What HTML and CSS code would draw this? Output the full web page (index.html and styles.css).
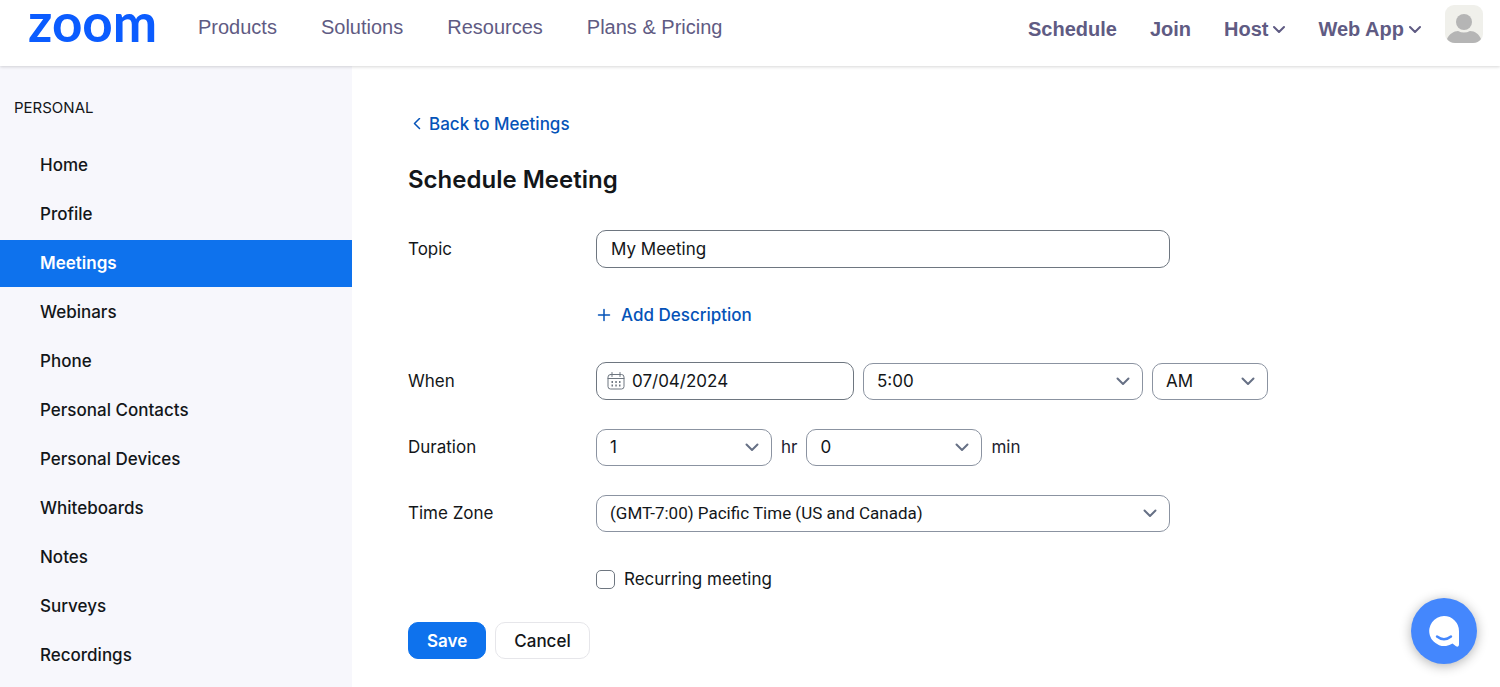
FILE: index.html
```
<!DOCTYPE html>
<html lang="en">
  <head>
    <meta charset="utf-8" />
    <meta name="viewport" content="width=device-width, initial-scale=1" />
    <title>Schedule Meeting - Zoom</title>
    <link rel="stylesheet" href="styles.css">
  </head>

  <body>
    <header class="header">
      <a class="logo" href="#">zoom</a>
      <nav class="nav-main" aria-label="Main">
        <a href="#">Products</a>
        <a href="#">Solutions</a>
        <a href="#">Resources</a>
        <a href="#">Plans &amp; Pricing</a>
      </nav>
      <nav class="nav-user" aria-label="Account">
        <a href="#">Schedule</a>
        <a href="#">Join</a>
        <a href="#">Host
          <svg width="12" height="8" viewBox="0 0 12 8"><path d="M1 2l5 5 5-5" /></svg>
        </a>
        <a href="#">Web App
          <svg width="12" height="8" viewBox="0 0 12 8"><path d="M1 2l5 5 5-5" /></svg>
        </a>
      </nav>
      <a class="avatar" href="#" aria-label="Profile">
        <svg width="38" height="38" viewBox="0 0 38 38">
          <rect width="38" height="38" rx="9" fill="#f0f0eb" />
          <circle cx="19" cy="17" r="8" fill="#b5b5b5" />
          <path d="M2 34C4 29 9 26 13 26q6 3 12 0C30 26 34 29 36 34q-3 4-8 4H10q-5 0-8-4z" fill="#b5b5b5" />
        </svg>
      </a>
    </header>

    <div class="layout">
      <aside class="sidebar">
        <h2>PERSONAL</h2>
        <nav class="side-nav" aria-label="Personal">
          <a href="#">Home</a>
          <a href="#">Profile</a>
          <a href="#" class="active">Meetings</a>
          <a href="#">Webinars</a>
          <a href="#">Phone</a>
          <a href="#">Personal Contacts</a>
          <a href="#">Personal Devices</a>
          <a href="#">Whiteboards</a>
          <a href="#">Notes</a>
          <a href="#">Surveys</a>
          <a href="#">Recordings</a>
        </nav>
      </aside>

      <main class="content">
        <a class="back-link" href="#">
          <svg width="8" height="12" viewBox="0 0 8 12"><path d="M6.500 .5L1.500 5.500l5 5" /></svg>
          Back to Meetings
        </a>
        <h1>Schedule Meeting</h1>

        <form class="meeting-form">
          <div class="form-row">
            <label for="topic">Topic</label>
            <div class="controls">
              <input type="text" id="topic" class="field wide" value="My Meeting">
            </div>
          </div>

          <div class="form-row">
            <div class="controls no-label">
              <button type="button" class="add-description">
                <svg width="16" height="16" viewBox="0 0 16 16"><path d="M8 2.500v11M2.500 8h11" /></svg>
                Add Description
              </button>
            </div>
          </div>

          <div class="form-row">
            <label for="date">When</label>
            <div class="controls">
              <div class="date-box">
                <input type="text" id="date" class="field" value="07/04/2024">
                <svg class="calendar" width="18" height="18" viewBox="0 0 18 18">
                  <rect x="1" y="2.500" width="16" height="14.500" rx="2.500" />
                  <path d="M1 6.500h16M5 .5v4M13 .5v4" />
                  <path class="dots" d="M8.300 10h1.500M12 10h1.500M4.500 13.500H6M8.300 13.500h1.500M12 13.500h1.500M4.500 10H6" />
                </svg>
              </div>
              <div class="select-box time">
                <select class="field" aria-label="Time">
                  <option>5:00</option>
                  <option>5:30</option>
                </select>
                <svg class="chevron" width="14" height="9" viewBox="0 0 14 9"><path d="M1.500 1.500L7 7l5.500-5.500" /></svg>
              </div>
              <div class="select-box ampm">
                <select class="field" aria-label="AM or PM">
                  <option>AM</option>
                  <option>PM</option>
                </select>
                <svg class="chevron" width="14" height="9" viewBox="0 0 14 9"><path d="M1.500 1.500L7 7l5.500-5.500" /></svg>
              </div>
            </div>
          </div>

          <div class="form-row">
            <label for="hours">Duration</label>
            <div class="controls">
              <div class="select-box short">
                <select class="field" id="hours">
                  <option>1</option>
                  <option>2</option>
                </select>
                <svg class="chevron" width="14" height="9" viewBox="0 0 14 9"><path d="M1.500 1.500L7 7l5.500-5.500" /></svg>
              </div>
              <label class="unit" for="hours">hr</label>
              <div class="select-box short">
                <select class="field" id="minutes">
                  <option>0</option>
                  <option>15</option>
                  <option>30</option>
                  <option>45</option>
                </select>
                <svg class="chevron" width="14" height="9" viewBox="0 0 14 9"><path d="M1.500 1.500L7 7l5.500-5.500" /></svg>
              </div>
              <label class="unit" for="minutes">min</label>
            </div>
          </div>

          <div class="form-row">
            <label for="timezone">Time Zone</label>
            <div class="controls">
              <div class="select-box wide">
                <select class="field zone" id="timezone">
                  <option>(GMT-7:00) Pacific Time (US and Canada)</option>
                </select>
                <svg class="chevron" width="14" height="9" viewBox="0 0 14 9"><path d="M1.500 1.500L7 7l5.500-5.500" /></svg>
              </div>
            </div>
          </div>

          <div class="form-row">
            <div class="controls no-label">
              <input type="checkbox" id="recurring" class="checkbox">
              <label for="recurring">Recurring meeting</label>
            </div>
          </div>

          <div class="form-actions">
            <button type="submit" class="btn btn-primary">Save</button>
            <button type="button" class="btn">Cancel</button>
          </div>
        </form>
      </main>
    </div>

    <button type="button" class="chat-button" aria-label="Open chat">
      <svg width="32" height="32" viewBox="0 0 32 32">
        <path d="M16 1a15 15 0 1 0 8.500 27.500l3.500 2.800q3 1.200 3-1.800V16A15 15 0 0 0 16 1z" fill="#fff" />
        <path d="M9 21.500q7 5.500 14 0" fill="none" stroke="#4487fd" stroke-width="2.400" stroke-linecap="round" />
      </svg>
    </button>
  </body>
</html>
```
FILE: styles.css
```
* {
  box-sizing: border-box;
}
body {
  margin: 0;
  min-height: 100vh;
  display: flex;
  flex-direction: column;
  font-family: Inter, "Liberation Sans", sans-serif;
  font-size: 17px;
  line-height: 24px;
  color: #131619;
  background-color: #fff;
}
a {
  color: inherit;
  text-decoration: none;
}
button,
input,
select {
  font: inherit;
  color: inherit;
}
svg {
  flex: none;
  fill: none;
  stroke-linecap: round;
  stroke-linejoin: round;
}

/* Header */
.header {
  display: flex;
  align-items: flex-start;
  height: 66px;
  padding: 0 17px 0 28px;
  box-shadow: 0 1px 3px rgba(0, 0, 0, 0.16);
  position: relative;
  color: #5f5b83;
  font-family: "Liberation Sans", Arial, sans-serif;
  font-size: 20px;
}
.logo {
  width: 170px;
  font-family: Lato, sans-serif;
  font-size: 53px;
  font-weight: 700;
  line-height: 44px;
  color: #0b5cff;
}
.nav-main {
  display: flex;
  gap: 44px;
  padding-top: 15px;
}
.nav-user {
  display: flex;
  gap: 33px;
  margin-left: auto;
  padding-top: 17px;
  font-weight: 700;
}
.nav-user a {
  display: flex;
  align-items: center;
  gap: 5px;
}
.nav-user svg {
  stroke: #5f5b83;
  stroke-width: 2;
}
.avatar {
  margin: 5px 0 0 24px;
}
.avatar svg {
  display: block;
}

/* Sidebar */
.layout {
  flex: 1;
  display: flex;
}
.sidebar {
  flex: 0 0 352px;
  background-color: #f7f7fc;
}
.sidebar h2 {
  margin: 30px 14px 22px;
  font-size: 15px;
  font-weight: 400;
  line-height: 24px;
}
.side-nav {
  display: flex;
  flex-direction: column;
  gap: 2px;
}
.side-nav a {
  padding: 11px 40px 12px;
  font-weight: 500;
}
.side-nav .active {
  background-color: #0e72ed;
  color: #fff;
  font-weight: 600;
}

/* Content */
.content {
  flex: 1;
  padding: 46px 56px 28px;
}
.back-link {
  display: inline-flex;
  align-items: center;
  gap: 8px;
  padding-left: 5px;
  color: #0553b8;
  font-weight: 500;
}
.back-link svg {
  stroke: #0553b8;
  stroke-width: 1.5;
}
h1 {
  margin: 28px 0 34px;
  font-size: 24px;
  font-weight: 600;
  line-height: 32px;
}
.meeting-form {
  display: flex;
  flex-direction: column;
  gap: 28px;
}
.form-row {
  display: grid;
  grid-template-columns: 188px 1fr;
  align-items: center;
  min-height: 38px;
}
.controls {
  display: flex;
  align-items: center;
  gap: 9px;
}
.no-label {
  grid-column: 2;
}
.field {
  display: block;
  width: 100%;
  height: 38px;
  padding: 0 14px;
  border: 1px solid #6e7680;
  border-radius: 10px;
  background-color: #fff;
}
select.field {
  height: 37px;
  padding: 0 13px;
  border-color: #8b93a1;
  appearance: none;
}
.wide {
  width: 574px;
}
select.zone {
  font-family: Roboto, sans-serif;
}
.select-box,
.date-box {
  position: relative;
}
.date-box {
  width: 258px;
}
.date-box .field {
  padding-left: 35px;
}
.time {
  width: 280px;
}
.ampm {
  width: 116px;
}
.short {
  width: 176px;
}
.chevron {
  position: absolute;
  right: 13px;
  top: 14px;
  pointer-events: none;
  stroke: #667085;
  stroke-width: 2;
}
.calendar {
  position: absolute;
  left: 11px;
  top: 10px;
  pointer-events: none;
  stroke: #6e7680;
}
.dots {
  stroke-width: 2;
  stroke-linecap: butt;
}
.unit {
  color: #222230;
}
.add-description {
  display: flex;
  align-items: center;
  gap: 9px;
  padding: 0;
  border: 0;
  background: none;
  color: #0553b8;
  font-weight: 500;
}
.add-description svg {
  stroke: #0553b8;
  stroke-width: 1.5;
}
.checkbox {
  appearance: none;
  width: 19px;
  height: 19px;
  margin: 0;
  border: 1px solid #6e7680;
  border-radius: 5px;
  background-color: #fff;
}
.checkbox:checked {
  background-color: #0e72ed;
}
.form-actions {
  display: flex;
  gap: 9px;
  margin-top: -4px;
}
.btn {
  height: 37px;
  padding: 0 18px;
  border: 1px solid #e6e6ea;
  border-radius: 10px;
  background-color: #fff;
  font-weight: 500;
}
.btn-primary {
  border-color: #0e72ed;
  background-color: #0e72ed;
  color: #fff;
  font-weight: 600;
}

/* Chat launcher */
.chat-button {
  position: fixed;
  right: 23px;
  bottom: 23px;
  display: flex;
  align-items: center;
  justify-content: center;
  width: 66px;
  height: 66px;
  padding: 0;
  border: 0;
  border-radius: 50%;
  background-color: #4487fd;
  box-shadow: 0 2px 12px rgba(0, 0, 0, 0.3);
}
```
